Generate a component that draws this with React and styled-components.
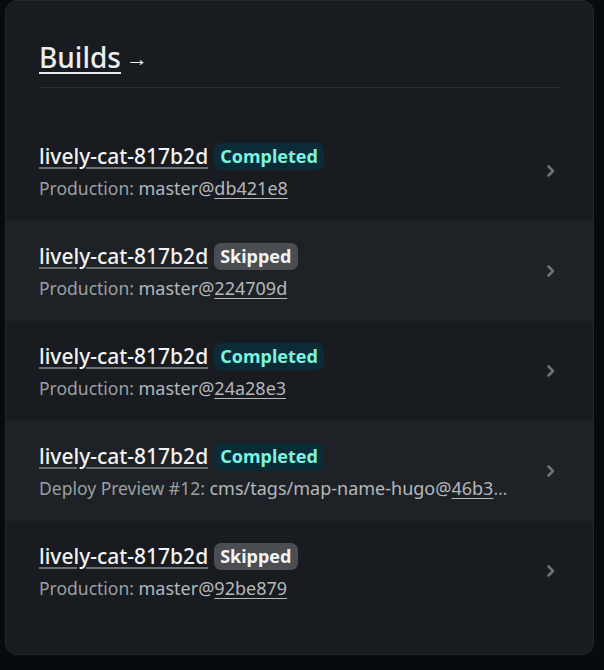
import styled, { createGlobalStyle } from 'styled-components';

const GlobalStyle = createGlobalStyle`
  html, body {
    margin: 0;
    padding: 0;
    background: #080b0e;
  }
  body {
    font-family: "Noto Sans", "Open Sans", sans-serif;
  }
`;

const Page = styled.div`
  padding: 0 10px 14px 5px;
  width: 604px;
  box-sizing: border-box;
`;

const Card = styled.section`
  background: #181b1f;
  border: 1px solid #24282c;
  border-radius: 12px;
  padding-bottom: 33px;
`;

const Header = styled.div`
  margin: 0 33px;
  padding: 38px 0 12px;
  border-bottom: 1px solid #2c3034;
  display: flex;
  align-items: center;
`;

const Title = styled.a`
  font-size: 28px;
  font-weight: 500;
  color: #ededed;
  text-decoration: underline;
  text-decoration-thickness: 2px;
  text-underline-offset: 4px;
  line-height: 36px;
`;

const Arrow = styled.span`
  font-size: 22px;
  color: #ededed;
  margin-left: 5px;
  line-height: 36px;
`;

const List = styled.ul`
  list-style: none;
  margin: 33px 0 0;
  padding: 0;
`;

const Row = styled.li`
  height: 100px;
  box-sizing: border-box;
  padding: 0 37px 0 33px;
  display: flex;
  align-items: center;
  background: ${({ $alt }) => ($alt ? '#1e2226' : '#181b1f')};
`;

const Info = styled.div`
  flex: 1;
  min-width: 0;
`;

const NameLine = styled.div`
  display: flex;
  align-items: center;
  gap: 6px;
`;

const Name = styled.a`
  font-size: 21px;
  font-weight: 500;
  color: #f2f2f2;
  text-decoration: underline;
  text-decoration-color: #6a6e73;
  text-underline-offset: 3px;
  line-height: 28px;
`;

const Badge = styled.span`
  font-size: 18px;
  font-weight: 700;
  line-height: 21px;
  padding: 3px 6px;
  border-radius: 7px;
  color: ${({ $status }) => ($status === 'Completed' ? '#7ef2de' : '#f4f4f4')};
  background: ${({ $status }) => ($status === 'Completed' ? '#0b2c37' : '#4a4d52')};
`;

const Meta = styled.div`
  margin-top: 6px;
  font-size: 17.5px;
  color: #9a9fa5;
  white-space: nowrap;
  overflow: hidden;
  text-overflow: ellipsis;
  max-width: 478px;
  line-height: 24px;
`;

const Ref = styled.span`
  color: #b4b8bc;
  font-size: 18px;
`;

const Hash = styled.a`
  color: #b4b8bc;
  text-decoration: underline;
  text-underline-offset: 3px;
`;

const Chevron = styled.svg`
  width: 10px;
  height: 12px;
  flex: none;
`;

const builds = [
  { status: 'Completed', ctx: 'Production:', branch: 'master', hash: 'db421e8' },
  { status: 'Skipped', ctx: 'Production:', branch: 'master', hash: '224709d' },
  { status: 'Completed', ctx: 'Production:', branch: 'master', hash: '24a28e3' },
  { status: 'Completed', ctx: 'Deploy Preview #12:', branch: 'cms/tags/map-name-hugo', hash: '46b3e1f' },
  { status: 'Skipped', ctx: 'Production:', branch: 'master', hash: '92be879' },
];

export default function App() {
  return (
    <Page>
      <GlobalStyle />
      <Card>
        <Header>
          <Title href="#">Builds</Title>
          <Arrow>→</Arrow>
        </Header>
        <List>
          {builds.map((b, i) => (
            <Row key={b.hash} $alt={i % 2 === 1}>
              <Info>
                <NameLine>
                  <Name href="#">lively-cat-817b2d</Name>
                  <Badge $status={b.status}>{b.status}</Badge>
                </NameLine>
                <Meta>
                  {b.ctx} <Ref>{b.branch}@<Hash href="#">{b.hash}</Hash></Ref>
                </Meta>
              </Info>
              <Chevron viewBox="0 0 10 12">
                <path d="M2.5 1.5 L7 6 L2.5 10.5" fill="none" stroke="#6c7176" strokeWidth="2.6" strokeLinejoin="round" strokeLinecap="round" />
              </Chevron>
            </Row>
          ))}
        </List>
      </Card>
    </Page>
  );
}
